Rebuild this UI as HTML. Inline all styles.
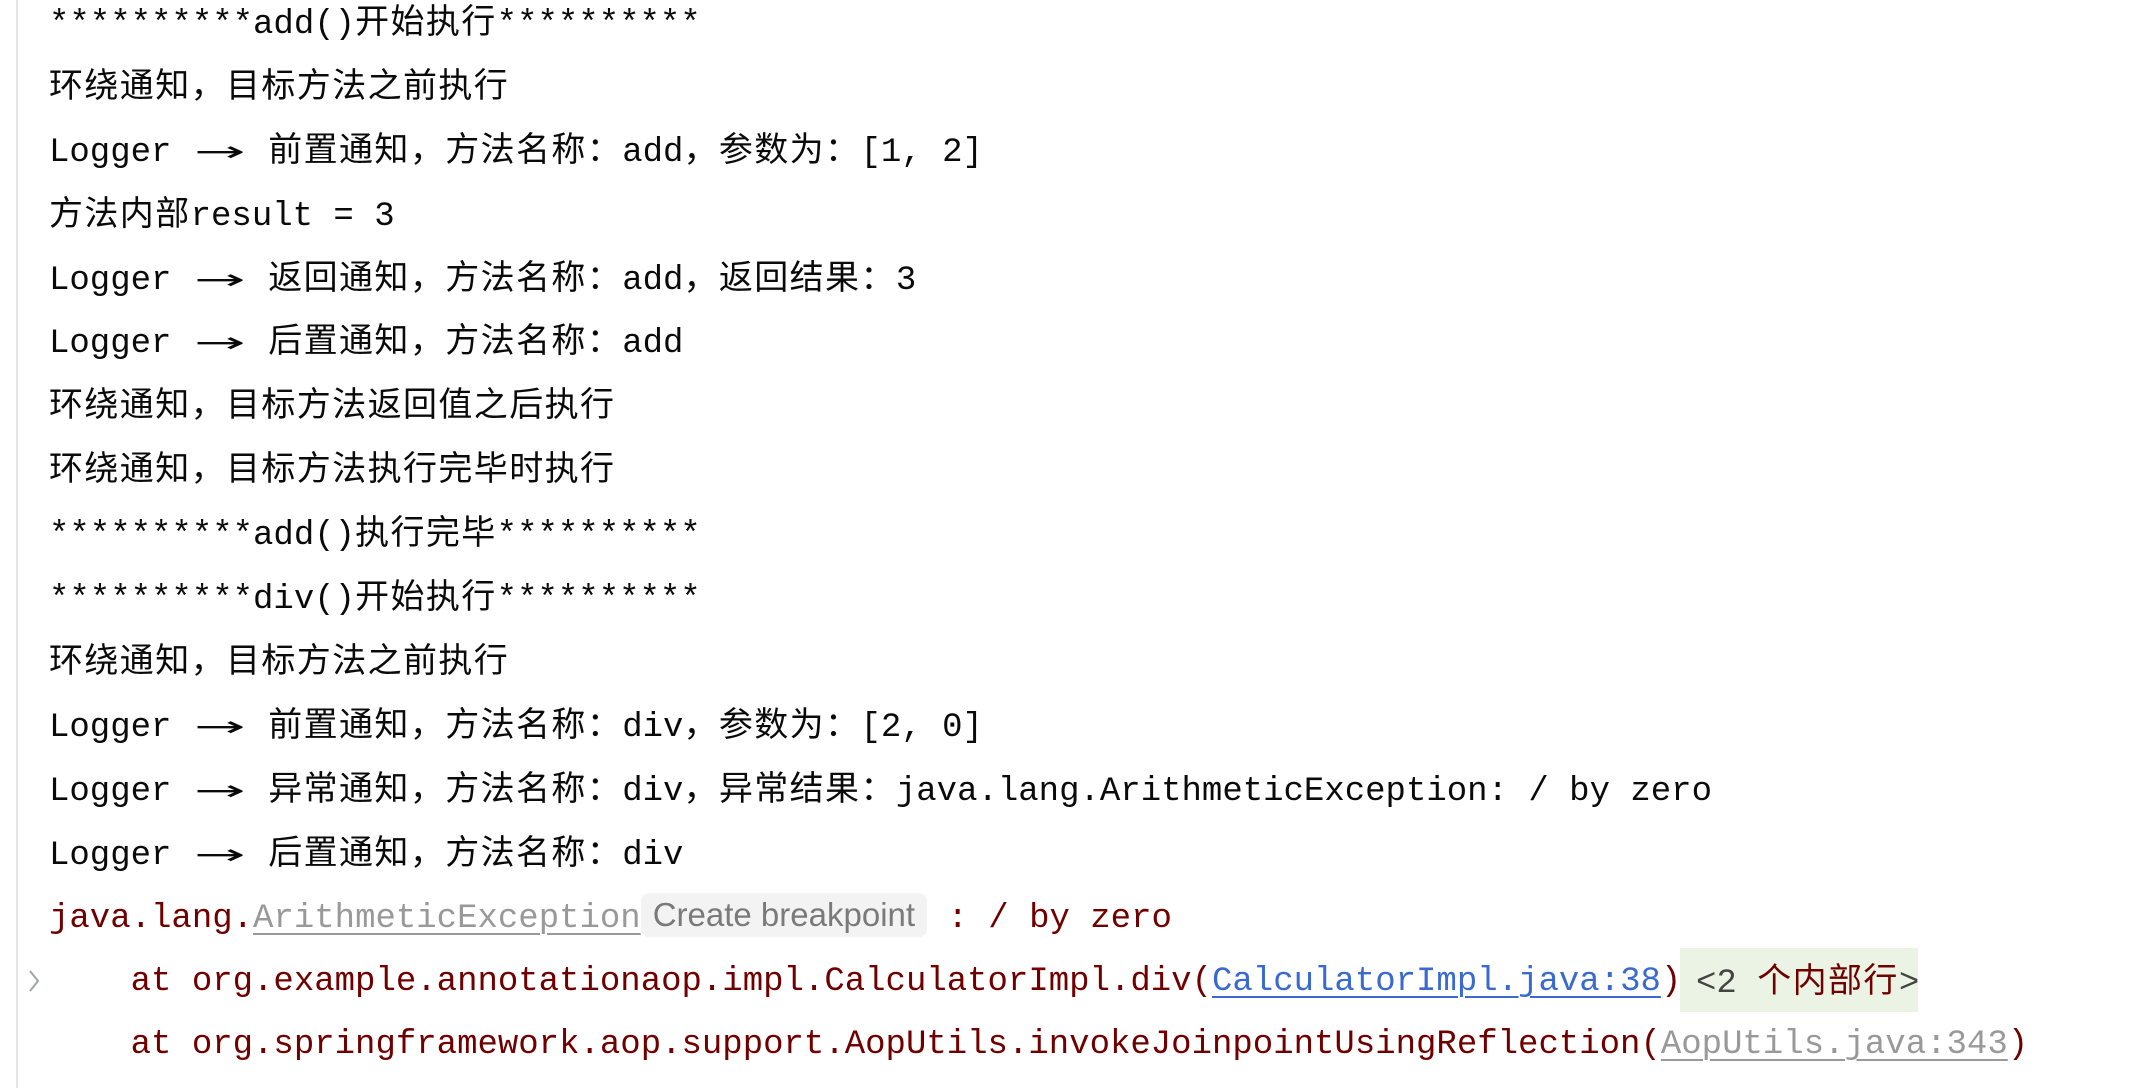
<!DOCTYPE html>
<html><head><meta charset="utf-8"><style>
html,body{margin:0;padding:0;background:#fff;width:2154px;height:1088px;overflow:hidden}
.bar{position:absolute;left:16px;top:0;width:2px;height:1088px;background:#e4e4e4}
.l{position:absolute;left:49px;height:64px;line-height:64px;white-space:pre;font-family:"Liberation Mono","Noto Sans CJK SC","DejaVu Sans Mono",monospace;font-size:34px;color:#0a0a0a}
.c{letter-spacing:1.4px;font-family:"Noto Sans CJK SC",sans-serif}
.a{display:inline-block;width:56px;text-align:center;transform:scaleX(2.2);font-family:"DejaVu Sans",sans-serif;font-size:28px}
.r{color:#700000}
.g{color:#999;text-decoration:underline;text-decoration-thickness:2px;text-underline-offset:6px}
.b{color:#3a6ad0;text-decoration:underline;text-decoration-thickness:2px;text-underline-offset:6px}
.pill{display:inline-block;background:#f3f3f3;border-radius:8px;color:#7a7a7a;font-family:"Liberation Sans",sans-serif;font-size:33px;line-height:44px;height:44px;padding:0 12px;vertical-align:middle;margin-top:-6px}
.gb{position:absolute;left:1680px;top:948px;width:238px;height:64px;background:#ebf4e4}
.gr{color:#444}
.gr span{color:#700000}
</style></head><body>
<div class="bar"></div>
<div class="gb"></div>
<div class="l" style="top:-13px">**********add()<span class="c">开始执行</span>**********</div>
<div class="l" style="top:51px"><span class="c">环绕通知，目标方法之前执行</span></div>
<div class="l" style="top:115px">Logger <span class="a">→</span> <span class="c">前置通知，方法名称：</span>add<span class="c">，参数为：</span>[1, 2]</div>
<div class="l" style="top:179px"><span class="c">方法内部</span>result = 3</div>
<div class="l" style="top:243px">Logger <span class="a">→</span> <span class="c">返回通知，方法名称：</span>add<span class="c">，返回结果：</span>3</div>
<div class="l" style="top:306px">Logger <span class="a">→</span> <span class="c">后置通知，方法名称：</span>add</div>
<div class="l" style="top:370px"><span class="c">环绕通知，目标方法返回值之后执行</span></div>
<div class="l" style="top:434px"><span class="c">环绕通知，目标方法执行完毕时执行</span></div>
<div class="l" style="top:498px">**********add()<span class="c">执行完毕</span>**********</div>
<div class="l" style="top:562px">**********div()<span class="c">开始执行</span>**********</div>
<div class="l" style="top:626px"><span class="c">环绕通知，目标方法之前执行</span></div>
<div class="l" style="top:690px">Logger <span class="a">→</span> <span class="c">前置通知，方法名称：</span>div<span class="c">，参数为：</span>[2, 0]</div>
<div class="l" style="top:754px">Logger <span class="a">→</span> <span class="c">异常通知，方法名称：</span>div<span class="c">，异常结果：</span>java.lang.ArithmeticException: / by zero</div>
<div class="l" style="top:818px">Logger <span class="a">→</span> <span class="c">后置通知，方法名称：</span>div</div>
<div class="l r" style="top:887px">java.lang.<span class="g">ArithmeticException</span><span class="pill">Create breakpoint</span> : / by zero</div>
<div class="l r" style="top:950px">    at org.example.annotationaop.impl.CalculatorImpl.div(<span class="b">CalculatorImpl.java:38</span>)</div>
<div class="l gr" style="top:946px;left:1696px">&lt;2 <span class="c">个内部行</span>&gt;</div>
<div class="l r" style="top:1013px">    at org.springframework.aop.support.AopUtils.invokeJoinpointUsingReflection(<span class="g">AopUtils.java:343</span>)</div>
<svg style="position:absolute;left:26px;top:968px" width="16" height="26"><path d="M4 3 L12 13 L4 23" fill="none" stroke="#a0a4ad" stroke-width="2"/></svg>
</body></html>
